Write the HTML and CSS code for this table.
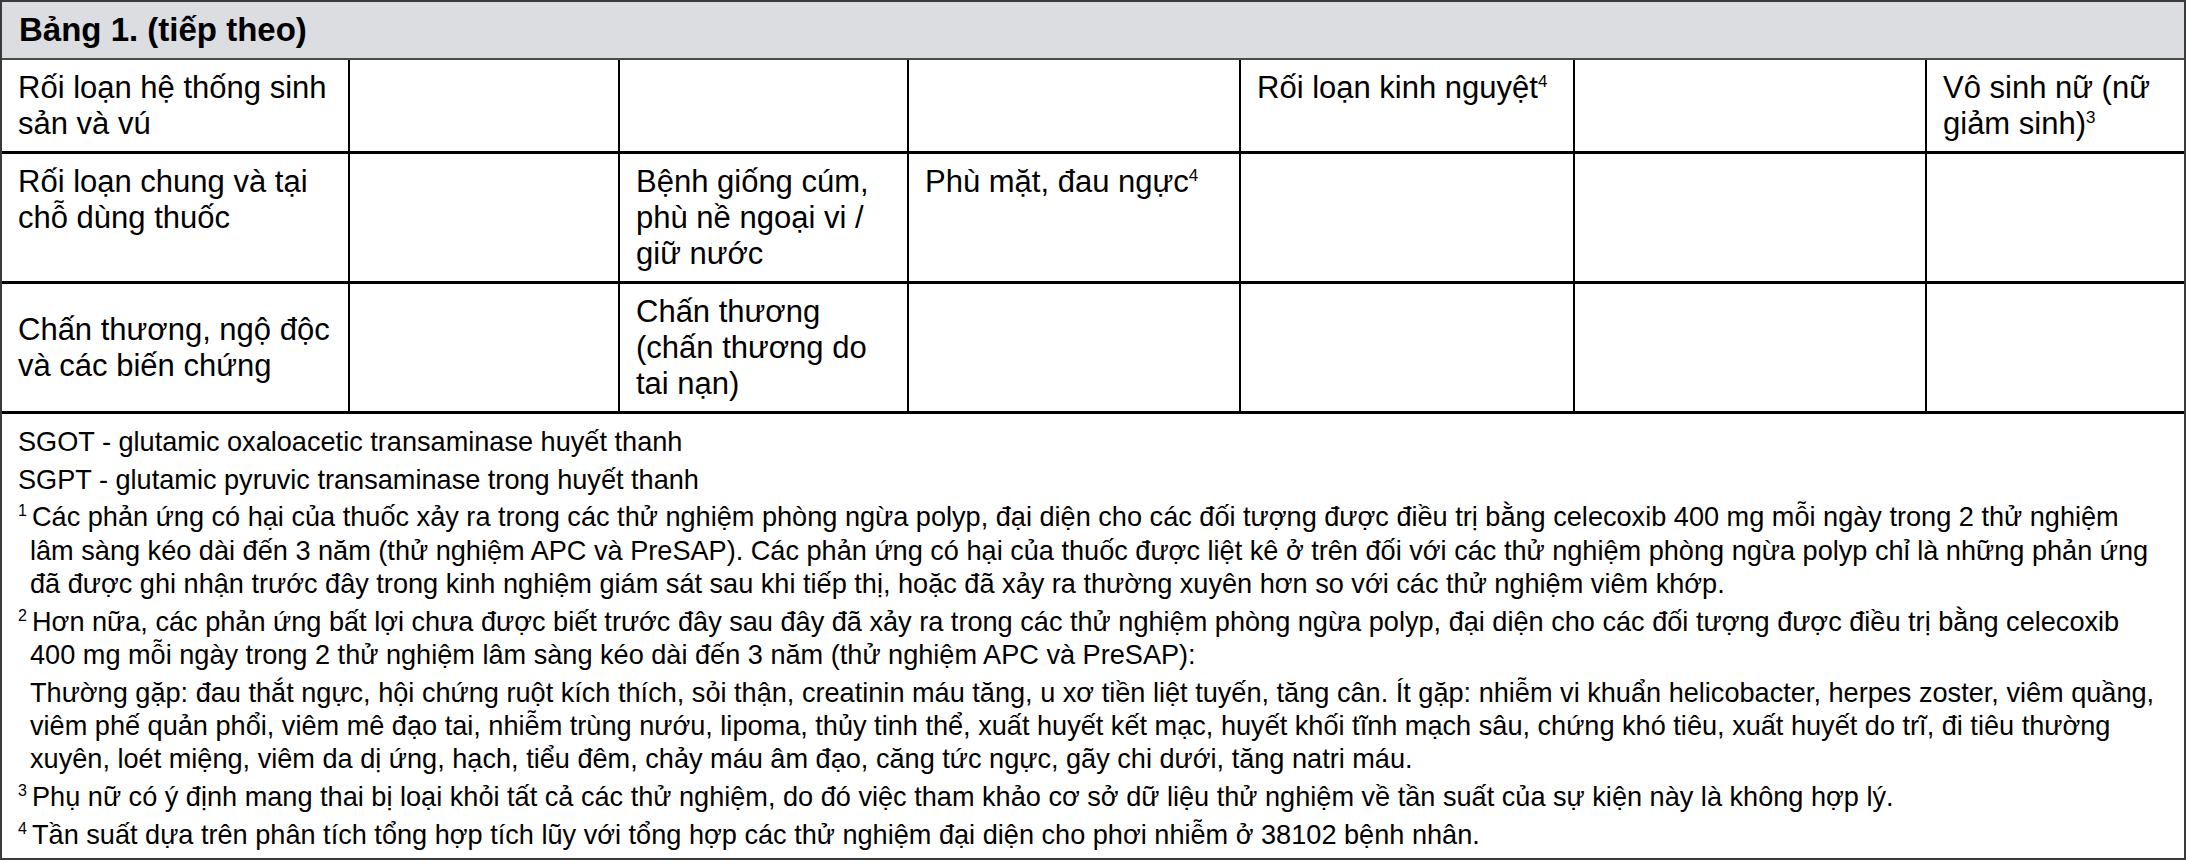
FILE: index.html
```html
<!DOCTYPE html>
<html lang="vi">
<head>
<meta charset="utf-8">
<title>Bảng 1. (tiếp theo)</title>
<link rel="stylesheet" href="styles.css">
</head>
<body>
<div class="sheet">
  <div class="title">Bảng 1. (tiếp theo)</div>
  <div class="grid">
    <div class="cell">Rối loạn hệ thống sinh<br>sản và vú</div>
    <div class="cell"></div>
    <div class="cell"></div>
    <div class="cell"></div>
    <div class="cell">Rối loạn kinh nguyệt<sup class="sup">4</sup></div>
    <div class="cell"></div>
    <div class="cell">Vô sinh nữ (nữ<br>giảm sinh)<sup class="sup">3</sup></div>

    <div class="cell">Rối loạn chung và tại<br>chỗ dùng thuốc</div>
    <div class="cell"></div>
    <div class="cell">Bệnh giống cúm,<br>phù nề ngoại vi /<br>giữ nước</div>
    <div class="cell">Phù mặt, đau ngực<sup class="sup">4</sup></div>
    <div class="cell"></div>
    <div class="cell"></div>
    <div class="cell"></div>

    <div class="cell cell-middle"><span>Chấn thương, ngộ độc<br>và các biến chứng</span></div>
    <div class="cell"></div>
    <div class="cell">Chấn thương<br>(chấn thương do<br>tai nạn)</div>
    <div class="cell"></div>
    <div class="cell"></div>
    <div class="cell"></div>
    <div class="cell"></div>
  </div>
  <div class="notes">
    <p>SGOT - glutamic oxaloacetic transaminase huyết thanh</p>
    <p>SGPT - glutamic pyruvic transaminase trong huyết thanh</p>
    <p class="fn"><span class="mark">1</span>Các phản ứng có hại của thuốc xảy ra trong các thử nghiệm phòng ngừa polyp, đại diện cho các đối tượng được điều trị bằng celecoxib 400 mg mỗi ngày trong 2 thử nghiệm<br>lâm sàng kéo dài đến 3 năm (thử nghiệm APC và PreSAP). Các phản ứng có hại của thuốc được liệt kê ở trên đối với các thử nghiệm phòng ngừa polyp chỉ là những phản ứng<br>đã được ghi nhận trước đây trong kinh nghiệm giám sát sau khi tiếp thị, hoặc đã xảy ra thường xuyên hơn so với các thử nghiệm viêm khớp.</p>
    <p class="fn"><span class="mark">2</span>Hơn nữa, các phản ứng bất lợi chưa được biết trước đây sau đây đã xảy ra trong các thử nghiệm phòng ngừa polyp, đại diện cho các đối tượng được điều trị bằng celecoxib<br>400 mg mỗi ngày trong 2 thử nghiệm lâm sàng kéo dài đến 3 năm (thử nghiệm APC và PreSAP):</p>
    <p class="indented">Thường gặp: đau thắt ngực, hội chứng ruột kích thích, sỏi thận, creatinin máu tăng, u xơ tiền liệt tuyến, tăng cân. Ít gặp: nhiễm vi khuẩn helicobacter, herpes zoster, viêm quầng,<br>viêm phế quản phổi, viêm mê đạo tai, nhiễm trùng nướu, lipoma, thủy tinh thể, xuất huyết kết mạc, huyết khối tĩnh mạch sâu, chứng khó tiêu, xuất huyết do trĩ, đi tiêu thường<br>xuyên, loét miệng, viêm da dị ứng, hạch, tiểu đêm, chảy máu âm đạo, căng tức ngực, gãy chi dưới, tăng natri máu.</p>
    <p class="fn"><span class="mark">3</span>Phụ nữ có ý định mang thai bị loại khỏi tất cả các thử nghiệm, do đó việc tham khảo cơ sở dữ liệu thử nghiệm về tần suất của sự kiện này là không hợp lý.</p>
    <p class="fn"><span class="mark">4</span>Tần suất dựa trên phân tích tổng hợp tích lũy với tổng hợp các thử nghiệm đại diện cho phơi nhiễm ở 38102 bệnh nhân.</p>
  </div>
</div>
</body>
</html>
```
FILE: styles.css
```css
* {
  box-sizing: border-box;
}

html,
body {
  margin: 0;
  padding: 0;
  background: #ffffff;
}

body {
  font-family: "Liberation Sans", Arial, sans-serif;
  color: #000000;
}

.sheet {
  width: 2186px;
  border: 2px solid #3a3a3a;
}

.title {
  height: 58px;
  display: flex;
  align-items: center;
  padding-left: 17px;
  background: #dcdde0;
  border-bottom: 2px solid #4a4a4a;
  font-size: 33px;
  font-weight: bold;
}

.grid {
  display: grid;
  grid-template-columns: 346px 268px 287px 330px 332px 350px 257px;
  column-gap: 2px;
  row-gap: 3px;
  background: #000000;
}

.cell {
  background: #ffffff;
  padding: 10px 14px 9px 16px;
  font-size: 31px;
  line-height: 36px;
}

.cell-middle {
  display: flex;
  align-items: center;
  padding-top: 9px;
}

.sup {
  font-size: 17px;
  line-height: 0;
  vertical-align: 11px;
}

.notes {
  border-top: 3px solid #000000;
  padding: 11px 4px 7px 16px;
  font-size: 27.13px;
  line-height: 33.3px;
  white-space: nowrap;
}

.notes p {
  margin: 0;
}

.notes p + p {
  margin-top: 4.45px;
}

.fn {
  padding-left: 12px;
  text-indent: -12px;
}

.indented {
  padding-left: 12px;
}

.mark {
  display: inline-block;
  width: 14px;
  text-indent: 0;
  font-size: 16px;
  line-height: 16px;
  vertical-align: 10px;
}
```
